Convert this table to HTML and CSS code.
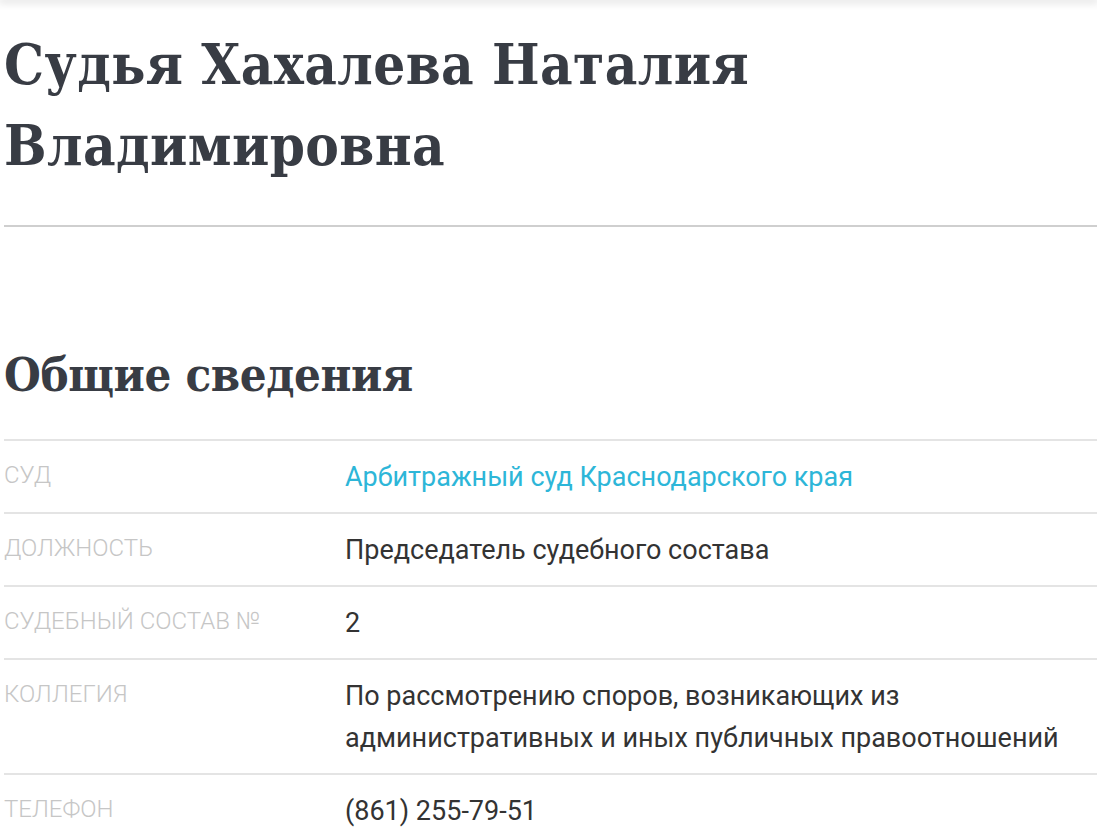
FILE: index.html
```html
<!DOCTYPE html>
<html lang="ru">
<head>
<meta charset="utf-8">
<title>Судья Хахалева Наталия Владимировна</title>
<link rel="stylesheet" href="styles.css">
</head>
<body>
<div class="topbar"></div>
<main class="page">
  <h1 class="title">Судья Хахалева Наталия Владимировна</h1>
  <h2 class="section-title">Общие сведения</h2>
  <div class="info">
    <div class="row">
      <div class="label">Суд</div>
      <div class="value"><a class="link" href="#">Арбитражный суд Краснодарского края</a></div>
    </div>
    <div class="row">
      <div class="label">Должность</div>
      <div class="value">Председатель судебного состава</div>
    </div>
    <div class="row">
      <div class="label">Судебный состав №</div>
      <div class="value">2</div>
    </div>
    <div class="row">
      <div class="label">Коллегия</div>
      <div class="value">По рассмотрению споров, возникающих из административных и иных публичных правоотношений</div>
    </div>
    <div class="row">
      <div class="label">Телефон</div>
      <div class="value">(861) 255-79-51</div>
    </div>
  </div>
</main>
</body>
</html>
```

FILE: styles.css
```css
html, body {
  margin: 0;
  padding: 0;
  background: #ffffff;
}
body {
  font-family: Roboto, "Noto Sans", sans-serif;
  color: #333333;
  overflow: hidden;
}
.topbar {
  height: 0;
  box-shadow: 0 0 8px 2px rgba(0, 0, 0, 0.18);
}
.page {
  padding-left: 4px;
}
.title {
  margin: 24px 0 0;
  padding-bottom: 39px;
  border-bottom: 2px solid #cfcfcf;
  font-family: "DejaVu Serif Condensed", "DejaVu Serif", serif;
  font-weight: bold;
  font-size: 56px;
  line-height: 81px;
  letter-spacing: 0.4px;
  color: #383c44;
}
.section-title {
  margin: 118px 0 0;
  font-family: "DejaVu Serif Condensed", "DejaVu Serif", serif;
  font-weight: bold;
  font-size: 47px;
  line-height: 60px;
  letter-spacing: -0.4px;
  color: #383c44;
}
.info {
  margin-top: 34px;
}
.row {
  display: grid;
  grid-template-columns: 341px 1fr;
  border-top: 2px solid #e4e4e4;
  padding: 15px 0 14px;
}
.label {
  margin-top: -2px;
  font-family: Roboto, sans-serif;
  font-weight: 300;
  font-size: 24px;
  line-height: 42px;
  text-transform: uppercase;
  color: #c6c6c6;
}
.value {
  font-size: 27px;
  line-height: 42px;
  color: #333333;
}
.link {
  color: #2db6d8;
  text-decoration: none;
}
```
